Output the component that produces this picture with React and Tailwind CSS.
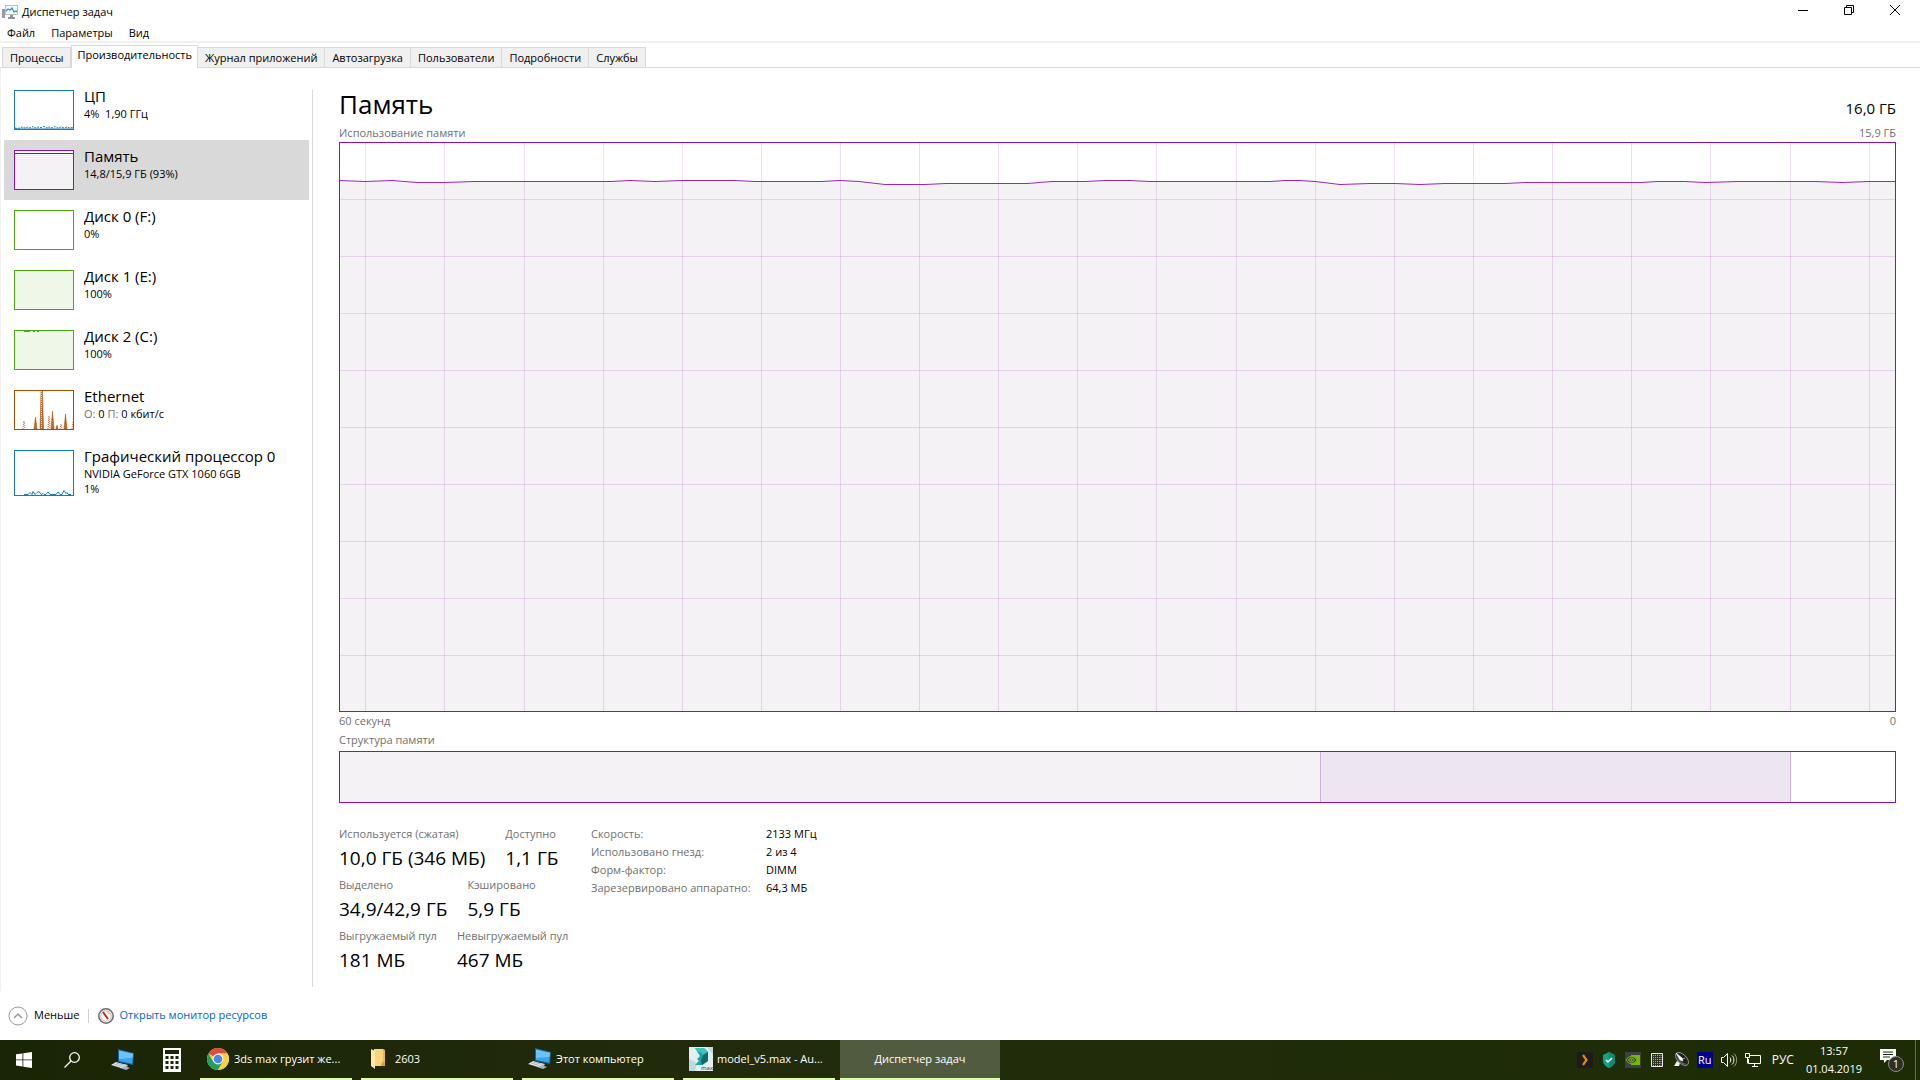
import React, { useState } from "react";

const tabs = [
  "Процессы",
  "Производительность",
  "Журнал приложений",
  "Автозагрузка",
  "Пользователи",
  "Подробности",
  "Службы",
];

const memoryLine =
  "0,38.5 26,39.5 53,38.5 78,40.5 105,40.5 136,39.5 271,39.5 291,38.5 316,39.5 343,38.5 396,38.5 416,39.5 482,39.5 501,38.5 520,39.5 546,42.5 586,42.5 607,41.5 688,41.5 713,39.5 746,39.5 766,38.5 791,38.5 811,39.5 931,39.5 946,38.5 961,38.5 976,39.5 1001,42.5 1031,41.5 1056,41.5 1081,42.5 1106,41.5 1166,41.5 1186,40.5 1301,40.5 1319,39.5 1346,39.5 1366,40.5 1399,39.5 1476,39.5 1504,40.5 1529,39.5 1557,39.5";

const gridX = [26, 105, 185, 264, 343, 422, 501, 580, 659, 738, 817, 897, 976, 1055, 1134, 1213, 1292, 1371, 1451, 1530];
const gridY = [57, 114, 171, 228, 285, 342, 399, 456, 513];

const CpuThumb = () => (
  <svg viewBox="0 0 58 38" className="block h-full w-full">
    <path
      d="M0 37l2 .5 3-.5 2-1 3 1 3-1 2 1 3-1.500 2 1.500 3-1 3 .5 3-1 3 1.500 2-1 3 1 3-1.500 3 1.500 3-1 3 1 3-1 3 1 2-.5 3 .5"
      fill="none"
      stroke="#117dbb"
      strokeDasharray="2 1"
    />
    <path d="M0 37.500h58" stroke="#117dbb" strokeOpacity="0.5" />
  </svg>
);

const MemoryThumb = () => (
  <svg viewBox="0 0 58 38" className="block h-full w-full">
    <path d="M0 0h58v2H0z" fill="#fff" />
    <path d="M0 2h58v36H0z" fill="#f4f2f4" />
    <path d="M0 2.500h58" stroke="#8b12ae" />
  </svg>
);

const DiskDips = () => (
  <svg viewBox="0 0 58 38" className="block h-full w-full">
    <path d="M9 .5h6M18 .5h2M22 .5h2" stroke="#4da60c" />
  </svg>
);

const EthernetThumb = () => (
  <svg viewBox="0 0 58 38" className="block h-full w-full">
    <path d="M8 38l1-8 1 8M33 38l1-13 1 13M45 38l1-5 1 5M57 38l1-7" fill="none" stroke="#d9663a" strokeDasharray="1 1" />
    <path d="M19 38l1.500-12 1.500 12zM25 38l1-38h1.500l1 38zM36 38l1.500-18 1.500 18zM41 38l1-4 1 4zM49 38l1.500-15 1.500 15z" fill="#b9692a" stroke="#a74f01" strokeWidth="0.5" />
    <path d="M26.500 0v38" stroke="#f0d8c4" strokeDasharray="1 1" />
  </svg>
);

const GpuThumb = () => (
  <svg viewBox="0 0 58 44" className="block h-full w-full">
    <path
      d="M9 43.500h4l2-2 2 2 1-3 2 3 2-2 2-1 2 3 2-1 1 1h2l2-2.500 2 2.500h6l2-2.500 2 2.500h2l2-4 2 3 1-1 1 2h3"
      fill="none"
      stroke="#117dbb"
    />
  </svg>
);

const devices = [
  { name: "ЦП", info: "4%  1,90 ГГц", box: "border-[#117dbb] bg-white", Thumb: CpuThumb },
  { name: "Память", info: "14,8/15,9 ГБ (93%)", box: "border-[#8b12ae] bg-white", Thumb: MemoryThumb },
  { name: "Диск 0 (F:)", info: "0%", box: "border-[#4da60c] bg-white" },
  { name: "Диск 1 (E:)", info: "100%", box: "border-[#4da60c] bg-[#eff7e9]" },
  { name: "Диск 2 (C:)", info: "100%", box: "border-[#4da60c] bg-[#eff7e9]", Thumb: DiskDips },
  {
    name: "Ethernet",
    info: (
      <>
        <span className="text-[#707070]">О:</span> 0 <span className="text-[#707070]">П:</span> 0 кбит/с
      </>
    ),
    box: "border-[#a74f01] bg-white",
    Thumb: EthernetThumb,
  },
  {
    name: "Графический процессор 0",
    info: "NVIDIA GeForce GTX 1060 6GB",
    extra: "1%",
    box: "border-[#117dbb] bg-white",
    Thumb: GpuThumb,
  },
];

const stats = [
  [["Используется (сжатая)", "10,0 ГБ (346 МБ)"], ["Доступно", "1,1 ГБ"]],
  [["Выделено", "34,9/42,9 ГБ"], ["Кэшировано", "5,9 ГБ"]],
  [["Выгружаемый пул", "181 МБ"], ["Невыгружаемый пул", "467 МБ"]],
];

const details = [
  ["Скорость:", "2133 МГц"],
  ["Использовано гнезд:", "2 из 4"],
  ["Форм-фактор:", "DIMM"],
  ["Зарезервировано аппаратно:", "64,3 МБ"],
];

const ComputerIcon = () => (
  <svg viewBox="0 0 24 22" className="h-[22px] w-6 shrink-0">
    <path d="M7 0l16 4-1 12-15-3z" fill="#1d5f9c" />
    <path d="M8 1.500l14 3.300-.8 10L8 12z" fill="#38a4ef" />
    <path d="M8 1.500l14 3.300-.3 4L8 10z" fill="#6ac4fb" />
    <path d="M12 15l5 1-1 2 3 1-4 2-6-2z" fill="#aab4bd" />
    <path d="M5 13l11 3-6 3-10-3z" fill="#dfe5ea" />
    <path d="M3 15l8 2.500M5.500 14l8 2.300" stroke="#9aa5af" strokeWidth="0.7" />
  </svg>
);

const ChromeIcon = () => (
  <svg viewBox="0 0 24 24" className="h-6 w-6 shrink-0">
    <circle cx="12" cy="12" r="11" fill="#fdd043" />
    <path d="M12 12L2.500 6.500A11 11 0 0 1 21.500 6.500H12z" fill="#dd4b3e" />
    <path d="M2.500 6.500A11 11 0 0 0 12 23l4.800-8.300L12 12 7.200 14.700z" fill="#1fa05f" />
    <path d="M12 6.500h9.500A11 11 0 0 1 12 23l4.800-8.300z" fill="#fdd043" />
    <circle cx="12" cy="12" r="5.400" fill="#f4f4f4" />
    <circle cx="12" cy="12" r="4.300" fill="#4a86ee" />
  </svg>
);

const FolderIcon = () => (
  <svg viewBox="0 0 24 22" className="h-[22px] w-6 shrink-0">
    <path d="M7 1h9v13l2 1V2l-2-1z" fill="#e9b84c" />
    <path d="M7 1h9v17H7z" fill="#f7d57b" />
    <path d="M15 14h3v4h-4z" fill="#d9a53a" />
    <path d="M4 1l4 2v18l-4-3z" fill="#fde9a9" />
  </svg>
);

const MaxIcon = () => (
  <svg viewBox="0 0 24 24" className="h-6 w-6 shrink-0">
    <path d="M0 0h24v24H0z" fill="#e4eef0" />
    <path d="M0 12l8 4-2 8H0zM18 0h6v8z" fill="#c3d8dc" />
    <path d="M6 1h9l4 4v9l-6 4H6l4-4-2-2 3-3-2-3z" fill="#1aa6a6" />
    <path d="M6 1h9l4 4-5 3-2-3H9z" fill="#3cc4bf" />
    <path d="M14 8l5-3v9l-6 4-1-4z" fill="#0a6b70" />
    <text x="12" y="23" fontSize="6" fontFamily="Open Sans" fill="#333">
      max
    </text>
  </svg>
);

const taskButtons = [
  { title: "3ds max грузит же...", Icon: ChromeIcon },
  { title: "2603", Icon: FolderIcon },
  { title: "Этот компьютер", Icon: ComputerIcon },
  { title: "model_v5.max - Au...", Icon: MaxIcon },
];

const TitleBar = () => (
  <header className="flex h-6 items-center justify-between">
    <div className="flex items-center gap-1 pl-[2px]">
      <svg viewBox="0 0 16 16" className="h-4 w-4">
        <path d="M0 5h3v9H0z" fill="#9a9a9a" />
        <path d="M1 6h1v2H1z" fill="#4fc23a" />
        <path d="M3 1h13v10H3z" fill="#b9bec2" />
        <path d="M4 2h11v8H4z" fill="#f3fafd" />
        <path d="M4 7l2-2 2 1 2-2 2 4 2-1 1 1" fill="none" stroke="#2a8fd0" strokeWidth="1.200" />
        <path d="M8 11h3v2h2v2H6v-2h2z" fill="#8d9296" />
      </svg>
      <h1 className="text-[11px]">Диспетчер задач</h1>
    </div>
    <div className="flex self-start pr-[2px]">
      <button aria-label="Свернуть" className="flex h-5 w-[46px] items-center justify-center">
        <svg viewBox="0 0 10 10" className="h-[10px] w-[10px]">
          <path d="M0 5.500h10" stroke="#000" />
        </svg>
      </button>
      <button aria-label="Свернуть в окно" className="flex h-5 w-[46px] items-center justify-center">
        <svg viewBox="0 0 10 10" className="h-[10px] w-[10px]">
          <path d="M.5 2.500h7v7h-7zM2.500 2.500v-2h7v7h-2" fill="none" stroke="#000" />
        </svg>
      </button>
      <button aria-label="Закрыть" className="flex h-5 w-[46px] items-center justify-center">
        <svg viewBox="0 0 10 10" className="h-[10px] w-[10px]">
          <path d="M0 0l10 10M10 0L0 10" stroke="#000" />
        </svg>
      </button>
    </div>
  </header>
);

const Sidebar = ({ selected, onSelect }) => (
  <aside className="w-[309px] shrink-0 border-l border-[#f0f0f0] pt-3 pl-[3px]">
    {devices.map(({ name, info, extra, box, Thumb }, i) => (
      <button
        key={name}
        onClick={() => onSelect(i)}
        className={`flex min-h-[60px] w-full gap-[10px] py-[10px] pl-[10px] text-left ${
          selected === i ? "bg-[#d9d9d9]" : ""
        }`}
      >
        <span className={`w-[60px] shrink-0 border ${box} ${extra ? "h-[46px]" : "h-10"}`}>
          {Thumb && <Thumb />}
        </span>
        <span className="flex flex-col -mt-1">
          <span className="text-[15px] leading-5">{name}</span>
          <span className="text-[11px] leading-[15px] whitespace-pre">{info}</span>
          {extra && <span className="text-[11px] leading-[15px]">{extra}</span>}
        </span>
      </button>
    ))}
  </aside>
);

const MemoryChart = () => (
  <svg viewBox="0 0 1557 570" preserveAspectRatio="none" className="block min-h-0 w-full flex-1 basis-0">
    <polygon points={`0,570 ${memoryLine} 1557,570`} fill="#f4f2f4" />
    {gridX.map((x) => (
      <path key={x} d={`M${x + 0.5} 0v570`} stroke="#8b12ae" strokeOpacity="0.14" />
    ))}
    {gridY.map((y) => (
      <path key={y} d={`M0 ${y + 0.5}h1557`} stroke="#8b12ae" strokeOpacity="0.14" />
    ))}
    <polyline points={memoryLine} fill="none" stroke="#9528b4" />
    <rect x="0.5" y="0.5" width="1556" height="569" fill="none" stroke="#8b12ae" />
  </svg>
);

const MemoryPanel = () => (
  <main className="flex min-w-0 flex-1 flex-col pt-[18px] pr-6 pb-4 pl-[26px]">
    <div className="flex h-9 items-baseline justify-between">
      <h2 className="text-[26px] leading-9">Память</h2>
      <span className="text-[15px]">16,0 ГБ</span>
    </div>
    <div className="mt-[3px] flex justify-between pb-px text-[11px] leading-4 text-[#707070]">
      <span>Использование памяти</span>
      <span>15,9 ГБ</span>
    </div>
    <MemoryChart />
    <div className="flex justify-between pt-px text-[11px] leading-4 text-[#707070]">
      <span>60 секунд</span>
      <span>0</span>
    </div>
    <span className="mt-[3px] text-[11px] leading-4 text-[#707070]">Структура памяти</span>
    <div className="mt-[3px] flex h-[52px] border border-[#8b12ae]">
      <div className="w-[63.1%] border-r border-[#cdb2d8] bg-[#f4f2f4]" />
      <div className="w-[30.2%] border-r border-[#cdb2d8] bg-[#ede5f2]" />
    </div>
    <div className="flex pt-[22px]">
      <div className="flex w-[252px] flex-col gap-[3px]">
        {stats.map((row) => (
          <dl key={row[0][0]} className="flex gap-5">
            {row.map(([label, value]) => (
              <div key={label} className="whitespace-nowrap">
                <dt className="text-[11px] leading-[18px] text-[#707070]">{label}</dt>
                <dd className="text-[19px] leading-[30px]">{value}</dd>
              </div>
            ))}
          </dl>
        ))}
      </div>
      <table className="self-start text-left text-[11px] leading-[18px]">
        <tbody>
          {details.map(([label, value]) => (
            <tr key={label}>
              <th scope="row" className="w-[175px] p-0 font-normal text-[#707070]">
                {label}
              </th>
              <td className="p-0">{value}</td>
            </tr>
          ))}
        </tbody>
      </table>
    </div>
  </main>
);

const Tray = () => (
  <div className="ml-auto flex items-center text-white">
    <div className="flex items-center gap-2">
      <svg viewBox="0 0 16 16" className="h-4 w-4">
        <path d="M0 0h16v16H0z" fill="#1c1c1c" />
        <path d="M6 3l3.500 5L6 13" fill="none" stroke="#e8821e" strokeWidth="2.200" />
      </svg>
      <svg viewBox="0 0 16 16" className="h-4 w-4">
        <path d="M8 0l6 3v6c0 3-3 6-6 7-3-1-6-4-6-7V3z" fill="#14a085" />
        <path d="M8 0l6 3v6c0 3-3 6-6 7z" fill="#0f8a74" />
        <path d="M5 8l2 2 4-4" fill="none" stroke="#fff" strokeWidth="1.500" />
      </svg>
      <svg viewBox="0 0 16 16" className="h-4 w-4">
        <path d="M0 0h16v16H0z" fill="#3b4147" />
        <path d="M6 3h9v10H6z" fill="#76b900" />
        <path d="M1 8c1.500-2.500 3.500-3.500 5.500-3.500S11 6 12 8c-1.500 2-3 3.500-5.500 3.500S2.500 10.500 1 8z" fill="#3b4147" stroke="#76b900" />
        <path d="M3.500 8c1-1.500 2-2 3-2s2.500 1 3 2c-1 1.300-2 2-3 2s-2-.8-3-2z" fill="none" stroke="#8fd016" />
        <circle cx="6.500" cy="8" r="1" fill="#76b900" />
      </svg>
      <svg viewBox="0 0 16 16" className="h-4 w-4">
        <path d="M2.500 1.500h11v13h-11z" fill="#2c3320" stroke="#e8e8e8" />
        <path d="M4.500 3v11M6.500 3v11M8.500 3v11M10.500 3v11M12 3v11" stroke="#a8ac9e" strokeDasharray="1 1" />
      </svg>
      <svg viewBox="0 0 16 16" className="h-4 w-4">
        <path d="M4 9l-3 5h5l1-3z" fill="#f2f2f2" />
        <ellipse cx="9" cy="7" rx="8" ry="4.500" transform="rotate(45 9 7)" fill="#1b1d1e" stroke="#a9adad" strokeWidth="0.800" />
        <path d="M3.500 2.500c0 3 4 8.500 11 9.500-3 2-11-1-11-9.500z" fill="#5d6264" />
        <path d="M3 1l6 5 1 3-3-1zM9 7l3-1" fill="#fff" stroke="#fff" strokeWidth="0.600" />
      </svg>
      <span className="flex h-4 w-4 items-center justify-center bg-[#00008b] text-[11px]">Ru</span>
      <svg viewBox="0 0 16 16" className="h-4 w-4" fill="none" stroke="#fff">
        <path d="M.5 5.500h2l4-4v13l-4-4h-2z" />
        <path d="M9 5.500c1 1 1 4 0 5M11 3.500c2.500 2 2.500 7 0 9" />
        <path d="M13 1.500c3.500 3 3.500 10 0 13" strokeOpacity="0.500" />
      </svg>
      <svg viewBox="0 0 16 16" className="h-4 w-4" fill="none" stroke="#fff">
        <path d="M5 3.500h10.500v8H3.500V7M7 14.500h6M9.500 11.500v3" />
        <path d="M.5 1.500h4v4h-4zM2.500 5.500v6" />
      </svg>
    </div>
    <span className="ml-[11px] text-xs">РУС</span>
    <div className="ml-3 text-center text-[11px] leading-[18px]">
      <div>13:57</div>
      <div>01.04.2019</div>
    </div>
    <button aria-label="Центр уведомлений, 1" className="ml-[18px]">
      <svg viewBox="0 0 24 26" className="h-[26px] w-6">
        <path d="M0 2h16v11H7l-3 3v-3H0z" fill="#fff" />
        <path d="M3 5h10M3 7.500h10M3 10h7" stroke="#1e2a0a" />
        <circle cx="16" cy="17" r="7.500" fill="#2b2f27" stroke="#8c9085" />
        <text x="16" y="21" fontSize="11" fontFamily="Open Sans" fill="#fff" textAnchor="middle">
          1
        </text>
      </svg>
    </button>
    <div className="ml-[11px] h-10 w-[5px] border-l border-[#69725a]" />
  </div>
);

const Taskbar = () => (
  <footer className="flex h-10 bg-linear-to-r from-[#1a2505] via-[#222c0d] via-40% to-[#1d2c05] text-[11px] text-white">
    <button aria-label="Пуск" className="flex w-12 items-center justify-center">
      <svg viewBox="0 0 16 16" className="h-4 w-4">
        <path d="M0 2.300L6.500 1.400v6.100H0zM7.300 1.300L16 0v7.500H7.300zM0 8.300h6.500v6.200L0 13.600zM7.300 8.300H16V16l-8.700-1.300z" fill="#fff" />
      </svg>
    </button>
    <button aria-label="Поиск" className="flex w-12 items-center justify-center">
      <svg viewBox="0 0 16 16" className="h-4 w-4">
        <circle cx="10.500" cy="5.500" r="4.800" fill="none" stroke="#fff" strokeWidth="1.300" />
        <path d="M7 9l-6.500 6.500" stroke="#fff" strokeWidth="1.300" />
      </svg>
    </button>
    <button aria-label="Компьютер" className="flex w-[54px] items-center justify-center">
      <ComputerIcon />
    </button>
    <button aria-label="Калькулятор" className="flex w-11 items-center justify-center">
      <svg viewBox="0 0 18 24" className="h-6 w-[18px]">
        <path d="M0 0h18v24H0z" fill="#fff" />
        <path d="M2 2h14v4H2z" fill="#1c2708" />
        <path d="M2.500 9.500h13M2.500 14.500h13M2.500 19.500h13" stroke="#1c2708" strokeWidth="3" strokeDasharray="3 2" />
      </svg>
    </button>
    <div className="ml-[2px] flex gap-px">
      {taskButtons.map(({ title, Icon }) => (
        <button key={title} className="flex w-[160px] flex-col px-1">
          <span className="flex flex-1 items-center gap-1 pl-[6px]">
            <Icon />
            {title}
          </span>
          <span className="h-[2px] w-full bg-[#ddffa6]" />
        </button>
      ))}
      <button className="flex w-[160px] flex-col bg-[#515b40]">
        <span className="flex flex-1 items-center self-center">Диспетчер задач</span>
        <span className="h-[2px] w-full bg-[#ddffa6]" />
      </button>
    </div>
    <Tray />
  </footer>
);

const App = () => {
  const [tab, setTab] = useState(1);
  const [selected, setSelected] = useState(1);

  return (
    <div className="flex h-screen flex-col bg-white font-['Open_Sans',sans-serif] text-black">
      <TitleBar />
      <nav className="flex h-[19px] items-center gap-4 border-b-2 border-[#f0f0f0] pt-px pl-[7px] text-[11px]">
        <button>Файл</button>
        <button>Параметры</button>
        <button>Вид</button>
      </nav>
      <div role="tablist" className="flex h-[25px] items-end text-[11px]">
        <div className="h-px w-[2px] bg-[#d9d9d9]" />
        {tabs.map((name, i) => (
          <button
            key={name}
            role="tab"
            aria-selected={tab === i}
            onClick={() => setTab(i)}
            className={
              tab === i
                ? "h-[23px] border-x border-t border-[#d9d9d9] bg-white px-[5px] pb-[3px]"
                : "h-[21px] border-y border-r border-[#d9d9d9] bg-[#f0f0f0] px-[7px] pt-px first-of-type:border-l"
            }
          >
            {name}
          </button>
        ))}
        <div className="h-px flex-1 bg-[#d9d9d9]" />
      </div>
      <div className="flex min-h-0 flex-1">
        <Sidebar selected={selected} onSelect={setSelected} />
        <div className="mt-[22px] mb-1 ml-[3px] w-px bg-[#d9d9d9]" />
        <MemoryPanel />
      </div>
      <div className="flex h-[49px] items-center pl-2 text-[11px]">
        <button className="flex items-center gap-[6px]">
          <svg viewBox="0 0 20 20" className="h-5 w-5" fill="none">
            <circle cx="10" cy="10" r="9" stroke="#999" />
            <path d="M6 12l4-4 4 4" stroke="#999" strokeWidth="1.500" />
          </svg>
          Меньше
        </button>
        <div className="mx-[9px] h-[14px] w-px bg-[#d0d0d0]" />
        <a href="#resmon" className="flex items-center gap-[5px] text-[#0066cc]">
          <svg viewBox="0 0 16 16" className="h-4 w-4">
            <circle cx="8" cy="8" r="7.200" fill="#f4f4f4" stroke="#6b6b6b" strokeWidth="1.500" />
            <circle cx="8" cy="8" r="5.200" fill="#fff" stroke="#c4b8b4" strokeWidth="0.800" />
            <path d="M5 4l5 7" stroke="#d4201a" strokeWidth="2" />
            <path d="M9 3.500l3 3" stroke="#e08a7a" />
          </svg>
          Открыть монитор ресурсов
        </a>
      </div>
      <Taskbar />
    </div>
  );
};

export default App;
